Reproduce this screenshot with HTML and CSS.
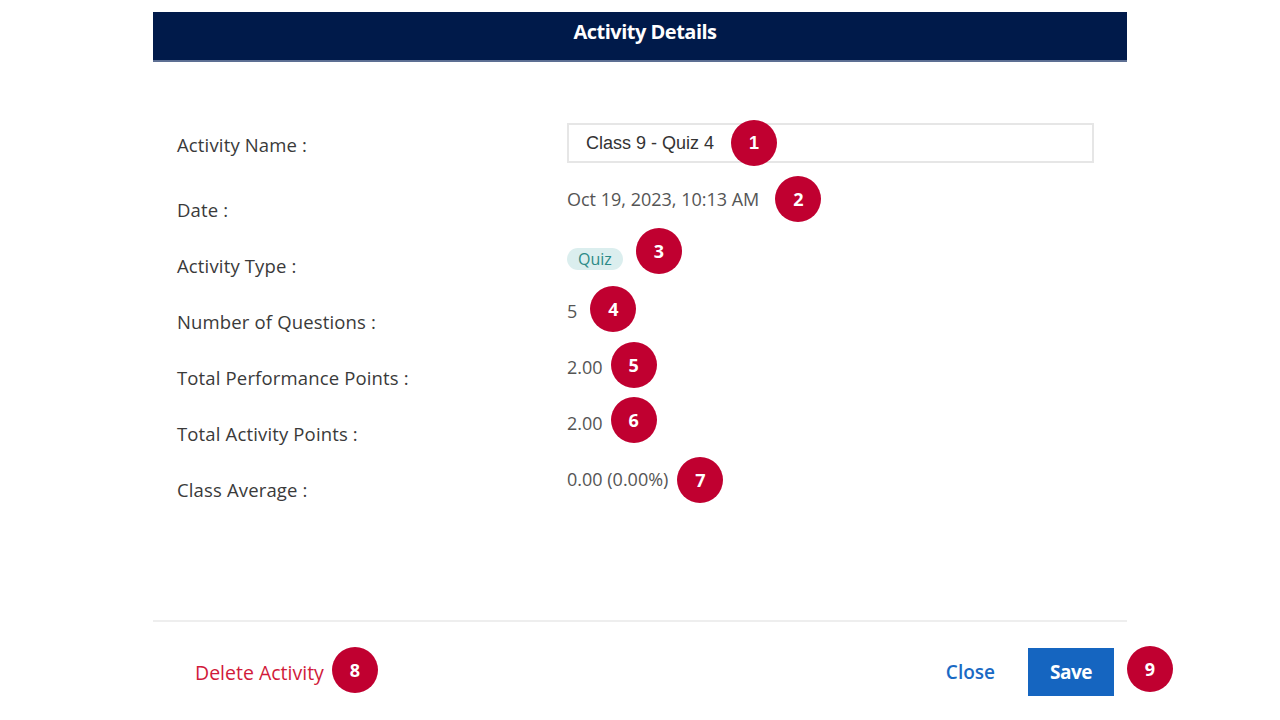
FILE: index.html
```html
<!DOCTYPE html>
<html>
<head>
<meta charset="utf-8">
<link rel="stylesheet" href="styles.css">
</head>
<body>
<div class="dialog">
  <div class="header">Activity Details</div>
  <div class="body">
    <div class="row row-first">
      <div class="label">Activity Name :</div>
      <div class="value">
        <div class="input-box">
          <span class="input-text">Class 9 - Quiz 4</span>
          <span class="badge b1">1</span>
        </div>
      </div>
    </div>
    <div class="row">
      <div class="label">Date :</div>
      <div class="value"><span class="text">Oct 19, 2023, 10:13 AM</span><span class="badge b2">2</span></div>
    </div>
    <div class="row">
      <div class="label">Activity Type :</div>
      <div class="value"><span class="pill">Quiz</span><span class="badge b3">3</span></div>
    </div>
    <div class="row">
      <div class="label">Number of Questions :</div>
      <div class="value"><span class="text">5</span><span class="badge b4">4</span></div>
    </div>
    <div class="row">
      <div class="label">Total Performance Points :</div>
      <div class="value"><span class="text">2.00</span><span class="badge b5">5</span></div>
    </div>
    <div class="row">
      <div class="label">Total Activity Points :</div>
      <div class="value"><span class="text">2.00</span><span class="badge b6">6</span></div>
    </div>
    <div class="row">
      <div class="label">Class Average :</div>
      <div class="value"><span class="text">0.00 (0.00%)</span><span class="badge b7">7</span></div>
    </div>
  </div>
  <div class="footer">
    <div class="left">
      <span class="delete">Delete Activity</span><span class="badge b8">8</span>
    </div>
    <div class="right">
      <span class="close">Close</span>
      <span class="save">Save</span>
      <span class="badge b9">9</span>
    </div>
  </div>
</div>
</body>
</html>
```
FILE: styles.css
```css
* { box-sizing: border-box; }
html, body { margin: 0; padding: 0; background: #fff; }
body {
  font-family: "Open Sans", "Noto Sans", sans-serif;
  width: 1280px;
  height: 720px;
  overflow: hidden;
}
.dialog {
  width: 974px;
  margin: 12px 0 0 153px;
}
.header {
  height: 50px;
  background: #001a4a;
  border-bottom: 2px solid #5d6f93;
  color: #fff;
  font-weight: 700;
  font-size: 20px;
  letter-spacing: -0.5px;
  display: flex;
  align-items: center;
  justify-content: center;
  padding-left: 10px;
  padding-bottom: 9px;
}
.body {
  padding: 61px 0 0 24px;
  height: 558px;
}
.row {
  display: flex;
  align-items: flex-start;
  height: 56px;
}
.row-first {
  height: 64px;
}
.label {
  width: 390px;
  font-size: 18.5px;
  letter-spacing: 0.15px;
  color: #3a3a3a;
  line-height: 24px;
  margin-top: 11px;
}
.row-first .label { margin-top: 10px; }
.value {
  display: flex;
  align-items: center;
  height: 24px;
  font-size: 18px;
  color: #555;
}
.row-first .value { height: 40px; }
.input-box {
  width: 527px;
  height: 40px;
  border: 2px solid #e6e6e6;
  display: flex;
  align-items: center;
  padding-left: 17px;
  font-family: "Liberation Sans", Arial, sans-serif;
  font-size: 18px;
  color: #333;
}
.badge {
  width: 46px;
  height: 46px;
  border-radius: 50%;
  background: #c00030;
  color: #fff;
  font-weight: 700;
  font-size: 18px;
  letter-spacing: 0;
  display: inline-flex;
  align-items: center;
  justify-content: center;
  flex-shrink: 0;
}
.b1 { margin-left: 17px; }
.b2 { margin-left: 16px; }
.b3 { margin-left: 13px; margin-top: -8px; }
.b4 { margin-left: 13px; margin-top: -4px; }
.b5 { margin-left: 8px; margin-top: -4px; }
.b6 { margin-left: 8px; margin-top: -6px; }
.b7 { margin-left: 9px; margin-top: 2px; }
.pill {
  background: #dbeeee;
  color: #2b8a87;
  font-size: 16px;
  height: 22px;
  padding: 0 11px;
  border-radius: 11px;
  display: inline-flex;
  align-items: center;
  margin-top: 7px;
}
.footer {
  border-top: 2px solid #eeeeee;
  height: 100px;
  display: flex;
  justify-content: space-between;
  align-items: flex-start;
  padding: 26px 13px 0 42px;
}
.left, .right {
  display: flex;
  align-items: center;
  height: 48px;
}
.delete {
  color: #d11a3a;
  font-size: 19.5px;
  letter-spacing: 0;
}
.b8 { margin-left: 8px; margin-top: -4px; }
.close {
  color: #1a6ac4;
  font-size: 19px;
  font-weight: 600;
  letter-spacing: 0;
  margin-right: 33px;
}
.save {
  width: 86px;
  height: 48px;
  background: #1565c0;
  color: #fff;
  font-weight: 700;
  font-size: 19px;
  letter-spacing: -0.5px;
  display: inline-flex;
  align-items: center;
  justify-content: center;
}
.b9 {
  margin-left: 13px;
  margin-right: -59px;
  margin-top: -6px;
}
```
